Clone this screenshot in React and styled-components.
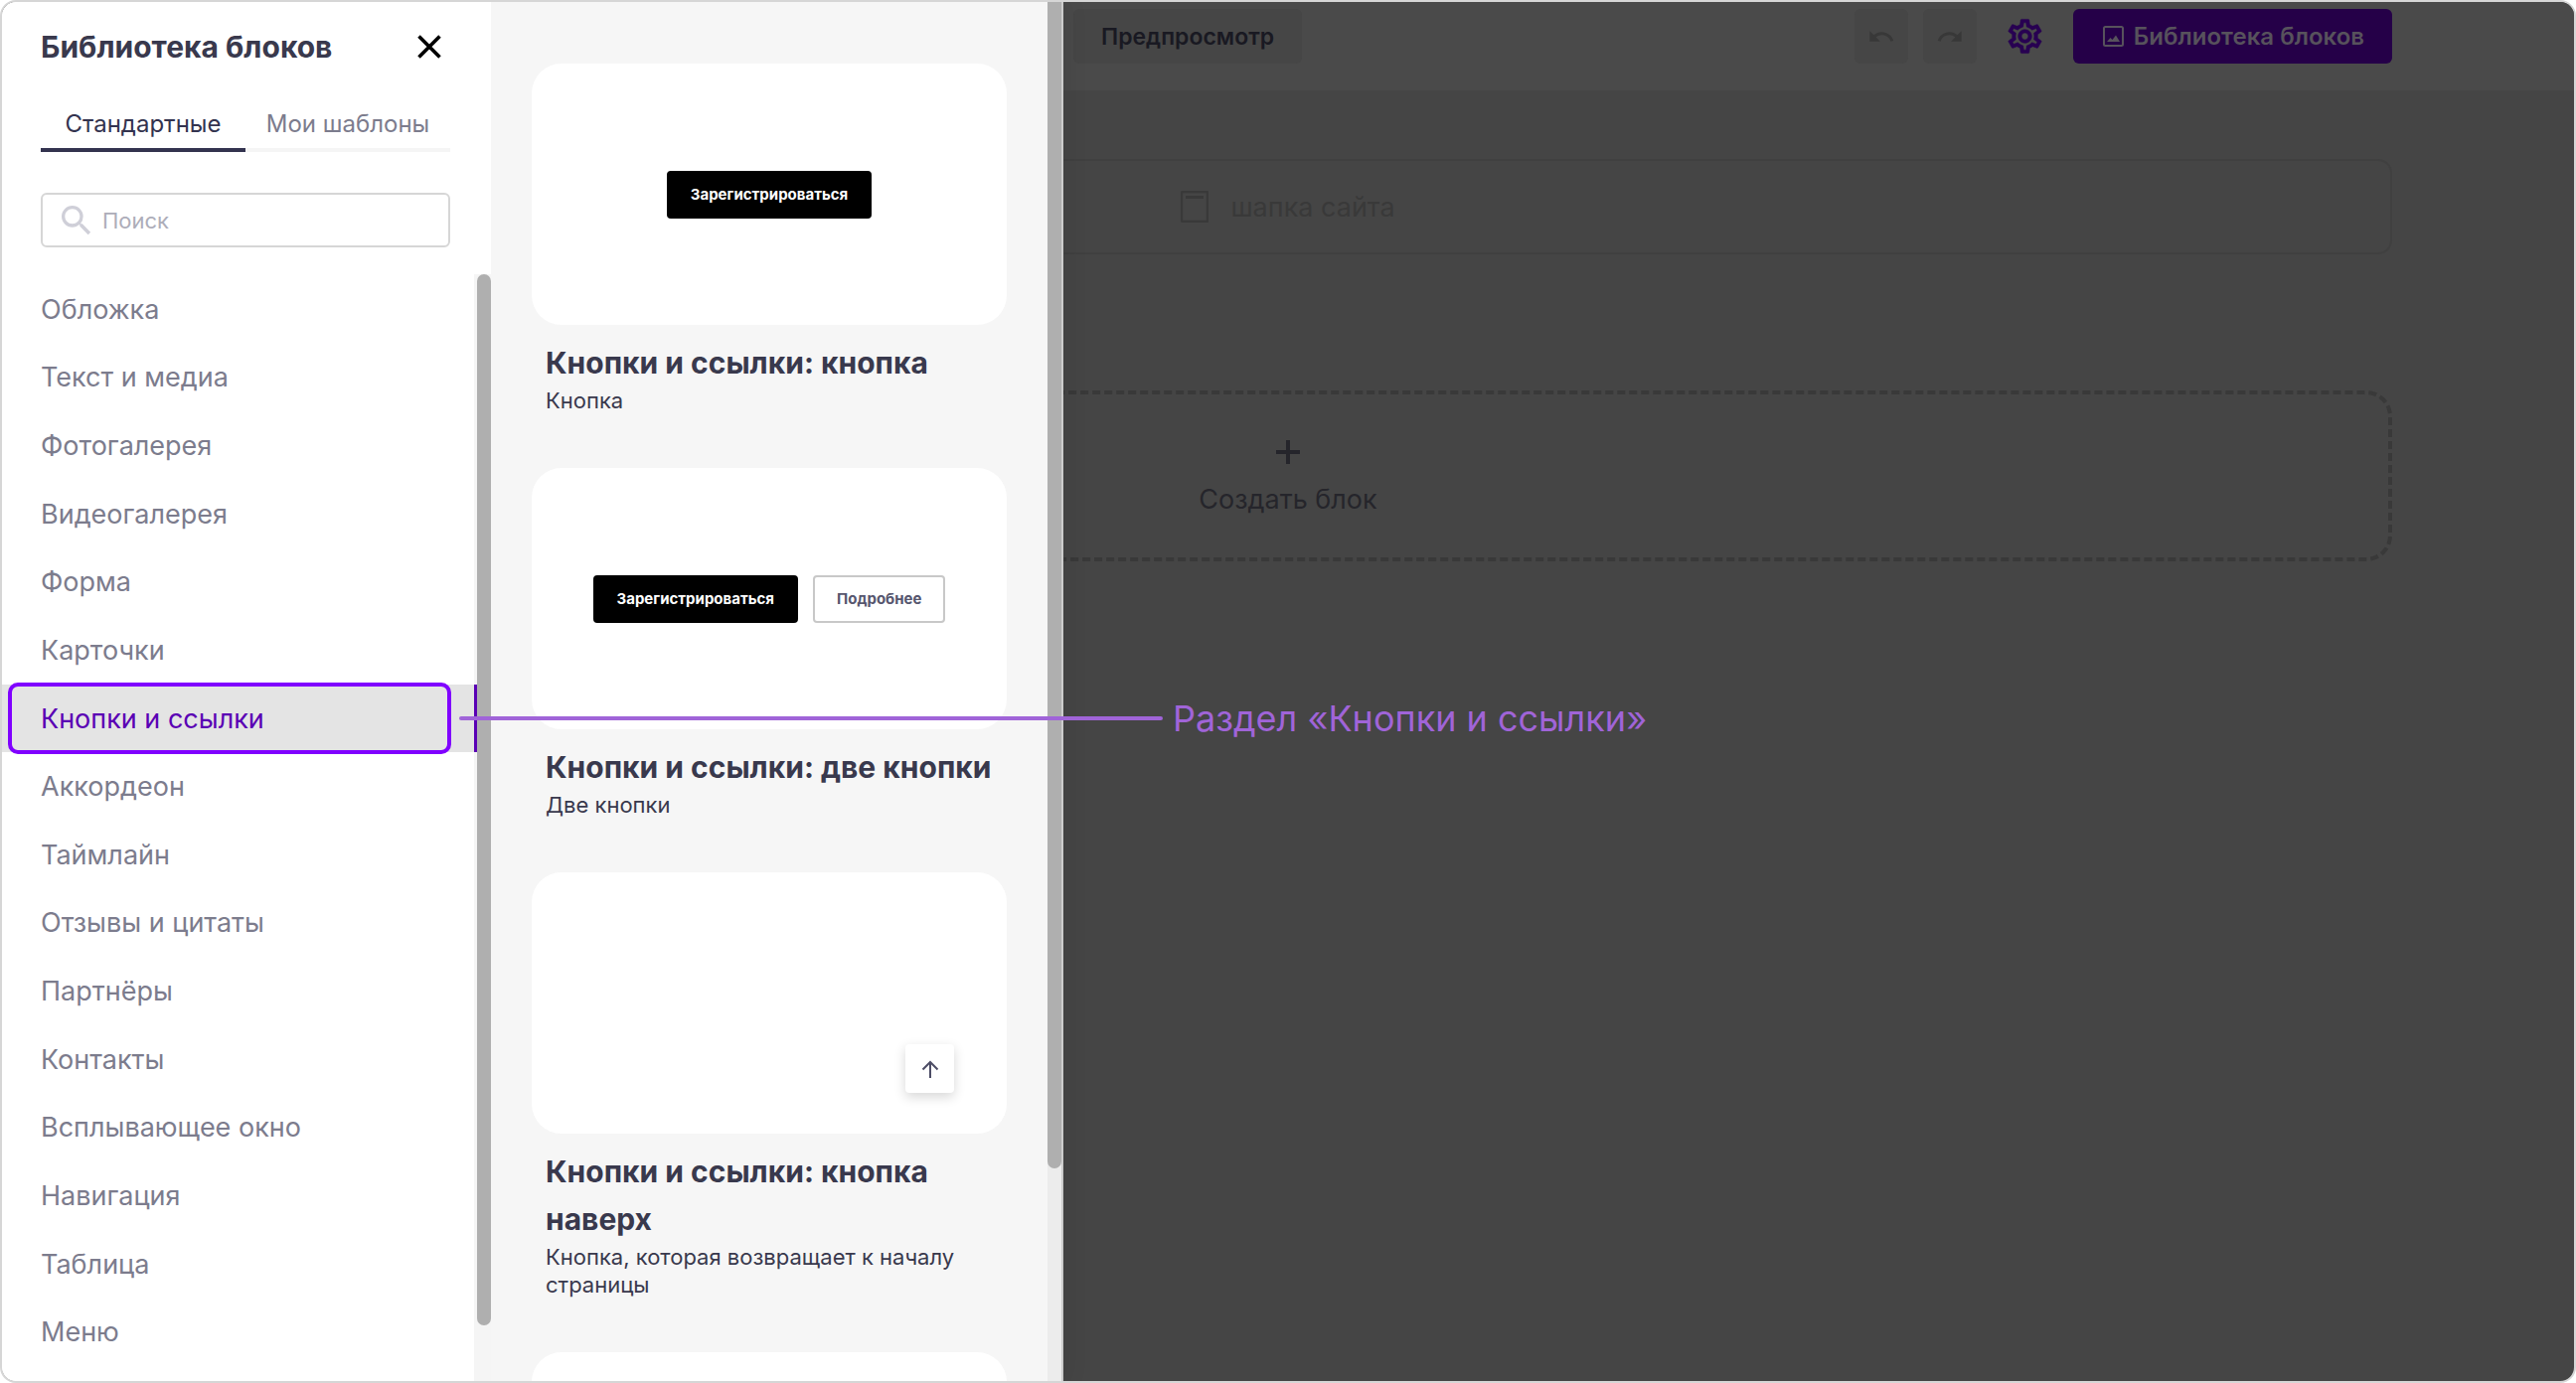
import React, { useState } from "react";
import styled, { createGlobalStyle } from "styled-components";
import { MdSearch, MdUndo, MdRedo } from "react-icons/md";

const vars = {
	font: `Inter, "Noto Sans", sans-serif`,
	text: "#39394d",
	muted: "#7c7c8d",
	accent: "#5a00b4",
	mark: "#8000ff",
	note: "#a064d8",
	line: "#d6d6d6",
	track: "#f5f5f5",
	thumb: "#afafaf",
	drawer: "1068px",
};

const GlobalStyle = createGlobalStyle`
	* {
		box-sizing: border-box;
	}

	body {
		margin: 0;
		background: #ffffff;
		font-family: ${vars.font};
		color: ${vars.text};
	}

	button,
	input {
		font-family: inherit;
		margin: 0;
	}

	button {
		padding: 0;
		border: none;
		background: none;
		cursor: pointer;
	}

	h2,
	h3,
	p {
		margin: 0;
	}
`;

const Frame = styled.div`
	position: relative;
	height: 100vh;
	border: 2px solid ${vars.line};
	border-radius: 16px;
	background: #454545;
	overflow: hidden;
`;

/* Editor, dimmed under the drawer */
const Toolbar = styled.header`
	display: flex;
	align-items: flex-start;
	height: 89px;
	padding: 7px 183px 0 calc(${vars.drawer} + 10px);
	background: #4a4a4a;
`;

const PreviewButton = styled.button`
	height: 55px;
	padding: 0 28px;
	margin-right: auto;
	border-radius: 6px;
	background: #464646;
	color: #191922;
	font-size: 23px;
	font-weight: 600;
`;

const SquareButton = styled.button`
	display: flex;
	align-items: center;
	justify-content: center;
	width: 54px;
	height: 55px;
	margin-right: 15px;
	border-radius: 6px;
	background: #464646;
	color: #383838;
`;

const GearButton = styled.button`
	display: flex;
	align-items: center;
	justify-content: center;
	height: 55px;
	padding: 0 28px 0 13px;
	color: #280052;
`;

const LibraryButton = styled.button`
	display: flex;
	align-items: center;
	gap: 10px;
	height: 55px;
	padding: 0 28px 0 30px;
	border-radius: 6px;
	background: #250048;
	color: #57525c;
	font-size: 24px;
	font-weight: 600;
`;

const Canvas = styled.main`
	display: flex;
	flex-direction: column;
	gap: 137px;
	padding: 69px 183px 0;
`;

const SiteHeader = styled.div`
	display: flex;
	align-items: center;
	justify-content: center;
	gap: 22px;
	height: 96px;
	border: 2px solid #404040;
	border-radius: 14px;
	color: #393939;
	font-size: 27px;
`;

const CreateBlock = styled.button`
	display: flex;
	flex-direction: column;
	align-items: center;
	justify-content: center;
	gap: 20px;
	height: 172px;
	padding-top: 4px;
	border: 4px dashed #393939;
	border-radius: 26px;
	color: #25252b;
	font-size: 27px;
	line-height: 32px;
`;

/* Drawer */
const Drawer = styled.aside`
	position: absolute;
	top: 0;
	bottom: 0;
	left: 0;
	display: flex;
	width: ${vars.drawer};
	background: #f6f6f6;
	border-right: 2px solid #cccccc;
	box-shadow: 0 0 24px rgba(0, 0, 0, 0.1);
`;

const Sidebar = styled.div`
	display: flex;
	flex-direction: column;
	width: 492px;
	background: #ffffff;
`;

const SidebarHead = styled.div`
	display: flex;
	flex-direction: column;
	padding: 23px 41px 27px 39px;
`;

const TitleRow = styled.div`
	display: flex;
	align-items: center;
	justify-content: space-between;
	padding-right: 9px;
	height: 44px;

	h2 {
		font-size: 30px;
		font-weight: 700;
	}
`;

const CloseButton = styled.button`
	display: flex;
`;

const Tabs = styled.div`
	display: flex;
	margin-top: 26px;
`;

const Tab = styled.button`
	flex: 1;
	height: 58px;
	padding-top: 4px;
	border-bottom: 4px solid ${(props) => (props.$active ? "#33334f" : "#f5f5f5")};
	color: ${(props) => (props.$active ? "#33334f" : vars.muted)};
	font-size: 24px;
`;

const Search = styled.label`
	display: flex;
	align-items: center;
	gap: 6px;
	height: 55px;
	margin-top: 41px;
	padding: 0 14px;
	border: 2px solid ${vars.line};
	border-radius: 6px;
	color: #cfcfd8;

	input {
		flex: 1;
		min-width: 0;
		padding: 0;
		border: none;
		outline: none;
		background: none;
		font-size: 22px;
		color: ${vars.text};
	}

	input::placeholder {
		color: #adadb9;
		opacity: 1;
	}
`;

const SidebarBody = styled.div`
	display: flex;
	flex: 1;
	min-height: 0;
`;

const Categories = styled.nav`
	display: flex;
	flex: 1;
	flex-direction: column;
	padding: 1px 0 15px;
	box-shadow: inset -3px 0 ${vars.track};
`;

const Category = styled.button`
	position: relative;
	flex: 1;
	padding: 0 0 0 39px;
	border-right: 3px solid ${(props) => (props.$active ? vars.accent : "transparent")};
	background: ${(props) => (props.$active ? "#e4e4e4" : "none")};
	color: ${(props) => (props.$active ? vars.accent : vars.muted)};
	font-size: 27px;
	text-align: left;
`;

const Mark = styled.span`
	position: absolute;
	top: -2px;
	right: 23px;
	bottom: -2px;
	left: 6px;
	border: 4px solid ${vars.mark};
	border-radius: 10px;
`;

const Note = styled.span`
	position: absolute;
	z-index: 1;
	top: 50%;
	left: 460px;
	display: flex;
	align-items: center;
	gap: 10px;
	color: ${vars.note};
	font-size: 36px;
	line-height: 44px;
	white-space: nowrap;
	transform: translateY(-50%);

	&::before {
		content: "";
		width: 708px;
		height: 4px;
		border-radius: 2px;
		background: ${vars.note};
	}
`;

const Scrollbar = styled.div`
	width: 14px;
	background: ${(props) => props.$track};
`;

const Thumb = styled.div`
	height: ${(props) => props.$size};
	border-radius: ${(props) => props.$radius};
	background: ${vars.thumb};
`;

const Blocks = styled.div`
	display: flex;
	flex: 1;
	flex-direction: column;
	gap: 54px;
	padding: 62px 41px 0;
	overflow: hidden;
`;

const Block = styled.article`
	flex-shrink: 0;

	h3 {
		padding-left: 14px;
		font-size: 30px;
		font-weight: 700;
		line-height: 48px;
	}

	p {
		padding: 0 14px;
		font-size: 22px;
		line-height: 28px;
	}
`;

const Preview = styled.div`
	display: flex;
	align-items: center;
	justify-content: center;
	gap: 15px;
	height: 263px;
	margin-bottom: 14px;
	border-radius: 30px;
	background: #ffffff;

	${(props) =>
		props.$corner &&
		`
		align-items: flex-end;
		justify-content: flex-end;
		padding: 0 53px 41px;
	`}
`;

const SampleButton = styled.button`
	height: 48px;
	padding: 0 22px;
	border: 2px solid ${(props) => (props.$outline ? "#c8c8c8" : "#000000")};
	border-radius: 4px;
	background: ${(props) => (props.$outline ? "#ffffff" : "#000000")};
	color: ${(props) => (props.$outline ? "#56566e" : "#ffffff")};
	font-size: 15px;
	font-weight: 700;
`;

const UpButton = styled.button`
	display: flex;
	align-items: center;
	justify-content: center;
	width: 49px;
	height: 49px;
	border-radius: 4px;
	background: #ffffff;
	box-shadow: 0 4px 12px rgba(0, 0, 0, 0.16);
	color: #4d4d66;
`;

const CloseIcon = () => (
	<svg width="24" height="24" viewBox="0 0 24 24" fill="none" stroke="#000000" strokeWidth="3.6">
		<path d="M1.5 1.5 22.5 22.5M22.5 1.5 1.5 22.5" />
	</svg>
);

const GearIcon = () => (
	<svg width="41" height="41" viewBox="0 0 24 24" fill="currentColor">
		<path
			stroke="currentColor"
			strokeWidth="0.3"
			d="M19.43 12.98c.04-.32.07-.64.07-.98s-.03-.66-.07-.98l2.11-1.65c.19-.15.24-.42.12-.64l-2-3.46a.5.5 0 0 0-.61-.22l-2.49 1c-.52-.4-1.08-.73-1.69-.98l-.38-2.65A.488.488 0 0 0 14 2h-4c-.25 0-.46.18-.49.42l-.38 2.65c-.61.25-1.17.59-1.69.98l-2.49-1a.5.5 0 0 0-.61.22l-2 3.46c-.13.22-.07.49.12.64l2.11 1.65c-.04.32-.07.65-.07.98s.03.66.07.98l-2.11 1.65c-.19.15-.24.42-.12.64l2 3.46c.12.22.39.3.61.22l2.49-1c.52.4 1.08.73 1.69.98l.38 2.65c.03.24.24.42.49.42h4c.25 0 .46-.18.49-.42l.38-2.65c.61-.25 1.17-.59 1.69-.98l2.49 1c.23.09.49 0 .61-.22l2-3.46c.12-.22.07-.49-.12-.64l-2.11-1.65zm-1.98-1.71c.04.31.05.52.05.73s-.02.43-.05.73l-.14 1.13.89.7 1.08.84-.7 1.21-1.27-.51-1.04-.42-.9.68c-.43.32-.84.56-1.25.73l-1.06.43-.16 1.13-.2 1.35h-1.4l-.19-1.35-.16-1.13-1.06-.43c-.43-.18-.83-.41-1.23-.71l-.91-.7-1.06.43-1.27.51-.7-1.21 1.08-.84.89-.7-.14-1.13c-.03-.31-.05-.54-.05-.74s.02-.43.05-.73l.14-1.13-.89-.7-1.08-.84.7-1.21 1.27.51 1.04.42.9-.68c.43-.32.84-.56 1.25-.73l1.06-.43.16-1.13.2-1.35h1.39l.19 1.35.16 1.13 1.06.43c.43.18.83.41 1.23.71l.91.7 1.06-.43 1.27-.51.7 1.21-1.07.85-.89.7.14 1.13zM12 8c-2.21 0-4 1.79-4 4s1.79 4 4 4 4-1.79 4-4-1.79-4-4-4zm0 6c-1.1 0-2-.9-2-2s.9-2 2-2 2 .9 2 2-.9 2-2 2z"
		/>
	</svg>
);

const PictureIcon = () => (
	<svg width="21" height="21" viewBox="0 0 21 21" fill="none">
		<rect x="1" y="1" width="19" height="19" rx="1.5" stroke="currentColor" strokeWidth="2" />
		<path d="M4 16 7.500 12l2 2 3.500-4.500 4 6.500z" fill="currentColor" />
	</svg>
);

const PageIcon = () => (
	<svg width="28" height="32" viewBox="0 0 28 32" fill="none" stroke="currentColor">
		<rect x="1" y="1" width="26" height="30" rx="1" strokeWidth="2.500" />
		<path d="M5 6.500H23" strokeWidth="3" />
	</svg>
);

const PlusIcon = () => (
	<svg width="24" height="24" viewBox="0 0 24 24" stroke="currentColor" strokeWidth="4">
		<path d="M12 0V24M0 12H24" />
	</svg>
);

const ArrowUpIcon = () => (
	<svg width="18" height="18" viewBox="0 0 18 18" fill="none" stroke="currentColor" strokeWidth="2">
		<path d="M9 18V2M1.500 9.500 9 2l7.500 7.500" />
	</svg>
);

const categories = [
	"Обложка",
	"Текст и медиа",
	"Фотогалерея",
	"Видеогалерея",
	"Форма",
	"Карточки",
	"Кнопки и ссылки",
	"Аккордеон",
	"Таймлайн",
	"Отзывы и цитаты",
	"Партнёры",
	"Контакты",
	"Всплывающее окно",
	"Навигация",
	"Таблица",
	"Меню",
];

const tabs = ["Стандартные", "Мои шаблоны"];

const App = () => {
	const [tab, setTab] = useState(tabs[0]);
	const [category, setCategory] = useState("Кнопки и ссылки");

	return (
		<Frame>
			<GlobalStyle />
			<Toolbar>
				<PreviewButton type="button">Предпросмотр</PreviewButton>
				<SquareButton type="button" aria-label="Отменить">
					<MdUndo size={28} />
				</SquareButton>
				<SquareButton type="button" aria-label="Повторить">
					<MdRedo size={28} />
				</SquareButton>
				<GearButton type="button" aria-label="Настройки">
					<GearIcon />
				</GearButton>
				<LibraryButton type="button">
					<PictureIcon />
					Библиотека блоков
				</LibraryButton>
			</Toolbar>
			<Canvas>
				<SiteHeader>
					<PageIcon />
					шапка сайта
				</SiteHeader>
				<CreateBlock type="button">
					<PlusIcon />
					Создать блок
				</CreateBlock>
			</Canvas>

			<Drawer>
				<Sidebar>
					<SidebarHead>
						<TitleRow>
							<h2>Библиотека блоков</h2>
							<CloseButton type="button" aria-label="Закрыть">
								<CloseIcon />
							</CloseButton>
						</TitleRow>
						<Tabs>
							{tabs.map((item) => (
								<Tab
									key={item}
									type="button"
									$active={item === tab}
									onClick={() => setTab(item)}
								>
									{item}
								</Tab>
							))}
						</Tabs>
						<Search>
							<MdSearch size={40} />
							<input type="text" placeholder="Поиск" aria-label="Поиск" />
						</Search>
					</SidebarHead>
					<SidebarBody>
						<Categories>
							{categories.map((item) => (
								<Category
									key={item}
									type="button"
									$active={item === category}
									onClick={() => setCategory(item)}
								>
									{item}
									{item === category && (
										<React.Fragment>
											<Mark />
											<Note>Раздел «{item}»</Note>
										</React.Fragment>
									)}
								</Category>
							))}
						</Categories>
						<Scrollbar $track={vars.track}>
							<Thumb $size="95%" $radius="7px" />
						</Scrollbar>
					</SidebarBody>
				</Sidebar>
				<Blocks>
					<Block>
						<Preview>
							<SampleButton type="button">Зарегистрироваться</SampleButton>
						</Preview>
						<h3>Кнопки и ссылки: кнопка</h3>
						<p>Кнопка</p>
					</Block>
					<Block>
						<Preview>
							<SampleButton type="button">Зарегистрироваться</SampleButton>
							<SampleButton type="button" $outline>
								Подробнее
							</SampleButton>
						</Preview>
						<h3>Кнопки и ссылки: две кнопки</h3>
						<p>Две кнопки</p>
					</Block>
					<Block>
						<Preview $corner>
							<UpButton type="button" aria-label="Наверх">
								<ArrowUpIcon />
							</UpButton>
						</Preview>
						<h3>Кнопки и ссылки: кнопка наверх</h3>
						<p>Кнопка, которая возвращает к началу страницы</p>
					</Block>
					<Block>
						<Preview />
					</Block>
				</Blocks>
				<Scrollbar $track="#ececec">
					<Thumb $size="1174px" $radius="0 0 7px 7px" />
				</Scrollbar>
			</Drawer>
		</Frame>
	);
};

export default App;
